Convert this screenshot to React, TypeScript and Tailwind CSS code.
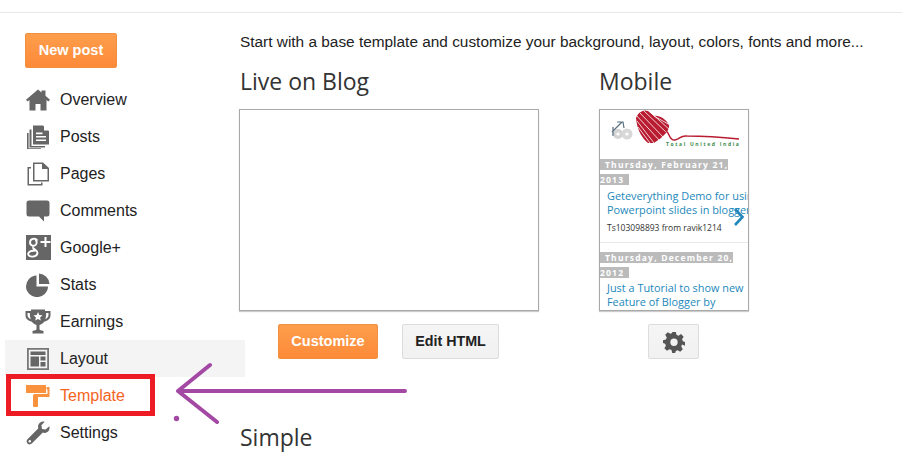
import React from "react";

const P = "fill-[#666666]";

const icons: Record<string, React.ReactNode> = {
  Overview: (
    <svg width="24" height="22" viewBox="0 0 24 22"><path className={P} d="M12 0.5 L15.5 3.4 V1.5 H19.5 V6.8 L24 10.8 L22.4 12.5 L20.5 11 V21.5 H14.5 V15 H9.5 V21.5 H3.5 V11 L1.6 12.5 L0 10.8 Z" /></svg>
  ),
  Posts: (
    <svg width="24" height="24" viewBox="0 0 24 24"><path className={P} d="M7 0.5 H17 L23 6 V19.5 H7 Z" /><path fill="#fff" d="M18 0.5 V5.5 H23 V4.5 L19 0.5 Z M10 7.5 H16.5 V9.2 H10 Z M10 11 H20 V12.6 H10 Z M10 14.5 H20 V16 H10 Z" /><path className={P} d="M3.5 4.5 H5.5 V21 H19 V22.5 H3.5 Z" /><path className={P} d="M1 8 H2.6 V23.2 H15 V24 H1 Z" /></svg>
  ),
  Pages: (
    <svg width="24" height="24" viewBox="0 0 24 24"><path className={P} fillRule="evenodd" d="M7 0.5 H17 L23 6 V19.5 H7 Z M8.5 2 V18 H21.5 V7 H16 V2 Z" /><path className={P} d="M1.5 5 H5 V6.5 H3 V22 H15 V20.5 H16.5 V23.5 H1.5 Z" /></svg>
  ),
  Comments: (
    <svg width="24" height="22" viewBox="0 0 24 22"><path className={P} d="M3 0.5 H21 Q23.5 0.5 23.5 3 V14 Q23.5 16.5 21 16.5 H18 V21.5 L13 16.5 H3 Q0.5 16.5 0.5 14 V3 Q0.5 0.5 3 0.5 Z" /></svg>
  ),
  "Google+": (
    <svg width="25" height="25" viewBox="0 0 25 25"><rect width="25" height="25" className={P} /><path fill="#fff" d="M18.5 2 H20.5 V6 H24.5 V8 H20.5 V12 H18.5 V8 H14.5 V6 H18.5 Z" /><path fill="none" stroke="#fff" strokeWidth="1.9" d="M11.5 5.5 C9 2.5 4 3.5 4 7.5 C4 10.5 8 12 10 9.5 C11.5 7 10 4.5 8 3.5 M7.5 12 C6.5 13 8 14 9.5 15 C12.5 17 12 21 7.5 21.5 C3.5 22 1.5 20 2.5 18 C3.5 16 7 15.5 9.5 15.5" /></svg>
  ),
  Stats: (
    <svg width="24" height="24" viewBox="0 0 24 24"><path className={P} d="M10.5 2.5 V13.5 H22 A11 10.8 0 1 1 10.5 2.5 Z" /><path className={P} d="M13 0.5 A11 11 0 0 1 23.5 11 H13 Z" /></svg>
  ),
  Earnings: (
    <svg width="26" height="25" viewBox="0 0 26 25"><path className={P} d="M6 0.5 H20 V2 H25.5 V6 C25.5 10 22.5 12 19.5 12.5 C18 14.5 16 15.5 14.5 16 V20 C14.5 21 16 21.5 18.5 22 V24.5 H7.5 V22 C10 21.5 11.5 21 11.5 20 V16 C10 15.5 8 14.5 6.5 12.5 C3.5 12 0.5 10 0.5 6 V2 H6 Z M2.5 4 V6 C2.5 8 4 9.6 5.6 10.2 C5 8.2 4.8 6 4.8 4 Z M23.5 4 H21.2 C21.2 6 21 8.2 20.4 10.2 C22 9.6 23.5 8 23.5 6 Z" fillRule="evenodd" /><path fill="#fff" d="M13 3 L14.3 6 L17.5 6.3 L15.1 8.4 L15.8 11.5 L13 9.9 L10.2 11.5 L10.9 8.4 L8.5 6.3 L11.7 6 Z" /></svg>
  ),
  Layout: (
    <svg width="24" height="24" viewBox="0 0 24 24"><path fill="#777777" fillRule="evenodd" d="M1 1 H23 V23 H1 Z M2.8 2.8 V21.2 H21.2 V2.8 Z" /><path className={P} d="M4.5 4.5 H19.5 V8 H4.5 Z M4.5 9.5 H13 V19.5 H4.5 Z M14.5 9.5 H19.5 V13.5 H14.5 Z M14.5 15 H19.5 V19.5 H14.5 Z" /></svg>
  ),
  Template: (
    <svg width="24" height="24" viewBox="0 0 24 24"><path fill="#f9913d" d="M0 1 H20 V9 H0 Z M20.5 3 H23.5 V13 H12 V22 Q12 23 11 23 H8 Q7 23 7 22 V11.5 Q7 10 8.5 10 H21.5 V5.5 H20.5 Z" /></svg>
  ),
  Settings: (
    <svg width="24" height="24" viewBox="0 0 24 24"><path className={P} d="M23.3 5.3 C24.2 8.4 22.7 11 19.8 11.8 C18.6 12.1 17.6 12 16.8 11.6 L5.8 22.6 C4.7 23.7 2.7 23.7 1.5 22.5 C0.3 21.3 0.3 19.5 1.5 18.3 L12.4 7.2 C11.8 5.8 11.9 4.3 12.8 2.9 C14.1 1 16.3 0 18.7 0.8 L15.4 4.2 L16 7.9 L19.6 8.6 Z" /><circle cx="3.8" cy="20.2" r="1.2" fill="#fff" /></svg>
  ),
};

const nav = ["Overview", "Posts", "Pages", "Comments", "Google+", "Stats", "Earnings", "Layout", "Template", "Settings"];

const orange = "bg-gradient-to-b from-[#fd9e4c] to-[#fd8a38] border border-[#f0903f] rounded-[2px] text-white font-bold text-[14.5px] flex items-center justify-center";

function MobilePreview() {
  const dateCls = "bg-[#bbbbbb] text-white font-bold text-[8.5px] tracking-[1.2px] leading-[13px] pl-[5px] pr-[5px]";
  const linkCls = "text-[#2288bb] text-[10.9px] leading-[14px] whitespace-nowrap";
  return (
    <div className="relative w-[150px] h-[202px] border border-[#a9a9a9] shadow-[0_1px_1px_#ccc] overflow-hidden bg-white font-['Open_Sans',sans-serif]">
      <svg width="148" height="48" viewBox="0 0 148 48" className="block mb-[-2px]">
        <circle cx="18" cy="24" r="5" fill="#d4d4d4" />
        <circle cx="18" cy="24" r="1.6" fill="#fff" />
        <circle cx="27" cy="24" r="5.5" fill="#d8d8d8" />
        <circle cx="27" cy="24" r="1.6" fill="#fff" />
        <path d="M12 22 L22 12 M17 12 L23 12 L24 18 M13 17 V26" fill="none" stroke="#5a7080" strokeWidth="1.2" />
        <path d="M36 8 C38 2 44 -1 48 1 L54 6 C59 5 66 9 69 15 C70 21 62 28 54 33 L48 33 C42 28 37 20 36 8 Z" fill="#b91c30" />
        <g stroke="#fff" strokeWidth="0.8">
          <path d="M36 5 L60 31 M40 3 L64 28 M44 1 L68 24 M49 1 L70 20 M37 11 L54 33 M38 17 L50 33 M54 6 L70 15" />
        </g>
        <path d="M66 21 C70 23 69 31 75 30 C81 29 80 25 87 26 C100 26 120 27 139 29" fill="none" stroke="#b91c30" strokeWidth="1.5" />
        <text x="66" y="36" fontSize="5" letterSpacing="1.65" fontWeight="bold" fill="#3c8a4d">Total United India</text>
      </svg>
      <div>
        <div className="pb-[8px] border-b border-[#e8e8e8]">
          <div className="w-[135px] h-[26px] leading-[13px]">
            <span className={dateCls}>Thursday, February 21, 2013</span>
          </div>
          <div className="px-[7px] pt-[7px]">
            <div className={linkCls}>Geteverything Demo for using</div>
            <div className={linkCls}>Powerpoint slides in blogger</div>
            <div className="text-[#333333] text-[8.5px] leading-[12px] mt-[5px] whitespace-nowrap">Ts103098893 from ravik1214</div>
          </div>
        </div>
        <div className="mt-[6px]">
          <div className="w-[140px] h-[26px] leading-[13px]">
            <span className={dateCls}>Thursday, December 20, 2012</span>
          </div>
          <div className="px-[7px] pt-[6px]">
            <div className={linkCls}>Just a Tutorial to show new</div>
            <div className={linkCls}>Feature of Blogger by</div>
          </div>
        </div>
      </div>
      <svg width="12" height="18" viewBox="0 0 12 18" className="absolute left-[133px] top-[98px]">
        <path d="M2 1 L9.5 9 L2 17" fill="none" stroke="#2288bb" strokeWidth="2.6" />
      </svg>
    </div>
  );
}

export default function App() {
  return (
    <div className="relative w-[902px] h-[463px] overflow-hidden bg-white font-['Liberation_Sans',Arial,sans-serif] text-[#222222]">
      <div className="h-[13px] border-b border-[#e8e8e8]" />
      <div className="flex">
        <aside className="w-[234px] pl-[5px] shrink-0">
          <div className="pl-[20px] pt-[20px]">
            <div className={`${orange} w-[92px] h-[35px]`}>New post</div>
          </div>
          <nav className="mt-[13px] w-[240px]">
            {nav.map((n) => (
              <div key={n} className={`flex items-center h-[37px] pl-[20px] ${n === "Layout" ? "bg-[#f4f4f4]" : ""}`}>
                <span className="w-[35px] flex justify-center items-center pr-[9px]">{icons[n]}</span>
                <span className={`text-[16px] ${n === "Template" ? "text-[#f4641e]" : "text-[#222222]"}`}>{n}</span>
              </div>
            ))}
          </nav>
        </aside>
        <main className="pl-[5px] flex-1">
          <p className="text-[15.4px] leading-[18px] mt-[20px] pl-[1px] whitespace-nowrap">Start with a base template and customize your background, layout, colors, fonts and more...</p>
          <div className="flex mt-[14px]">
            <section className="w-[360px]">
              <h2 className="font-['Open_Sans',sans-serif] text-[23px] leading-[32px] text-[#333333] pl-[1px]">Live on Blog</h2>
              <div className="w-[300px] h-[202px] mt-[12px] border border-[#a9a9a9] shadow-[0_1px_1px_#ccc]" />
              <div className="flex gap-[24px] mt-[13px] pl-[39px]">
                <div className={`${orange} w-[100px] h-[35px]`}>Customize</div>
                <div className="w-[97px] h-[35px] border border-[#dcdcdc] rounded-[2px] bg-gradient-to-b from-[#f5f5f5] to-[#f1f1f1] text-[#222222] font-bold text-[14.3px] flex items-center justify-center">Edit HTML</div>
              </div>
            </section>
            <section>
              <h2 className="font-['Open_Sans',sans-serif] text-[23px] leading-[32px] text-[#333333]">Mobile</h2>
              <div className="mt-[12px]"><MobilePreview /></div>
              <div className="mt-[13px] ml-[49px] w-[51px] h-[35px] border border-[#dcdcdc] rounded-[2px] bg-gradient-to-b from-[#f5f5f5] to-[#f1f1f1] flex items-center justify-center">
                <svg width="22" height="22" viewBox="0 0 24 24"><path fill="#555" fillRule="evenodd" d="M10 1 H14 L14.7 4.2 L16.9 5.1 L19.7 3.4 L22.5 6.2 L20.8 9 L21.7 11.2 L24 12 V16 L20.8 14.8 L19.9 17 L21.6 19.8 L18.8 22.6 L16 20.9 L14 21.8 L13.2 24 H10 L9.3 20.8 L7.1 19.9 L4.3 21.6 L1.5 18.8 L3.2 16 L2.3 13.8 L0 13 V10 L3.2 9.2 L4.1 7 L2.4 4.2 L5.2 1.4 L8 3.1 L10 2.2 Z M12 8.3 A4 4 0 1 0 12 16.3 A4 4 0 1 0 12 8.3 Z" /></svg>
              </div>
            </section>
          </div>
          <h2 className="font-['Open_Sans',sans-serif] text-[23px] leading-[32px] text-[#333333] mt-[62px] pl-[1px]">Simple</h2>
        </main>
      </div>
      <div className="absolute left-[6px] top-[374px] w-[149px] h-[42px] border-[5px] border-[#ed1c24]" />
      <svg width="245" height="70" viewBox="0 0 245 70" className="absolute left-[170px] top-[358px]">
        <path d="M235 33 H8 L40 7 M8 33 L47 64" fill="none" stroke="#a349a4" strokeWidth="4" strokeLinecap="round" strokeLinejoin="round" />
        <circle cx="6.5" cy="60.5" r="2.7" fill="#a349a4" />
      </svg>
    </div>
  );
}
